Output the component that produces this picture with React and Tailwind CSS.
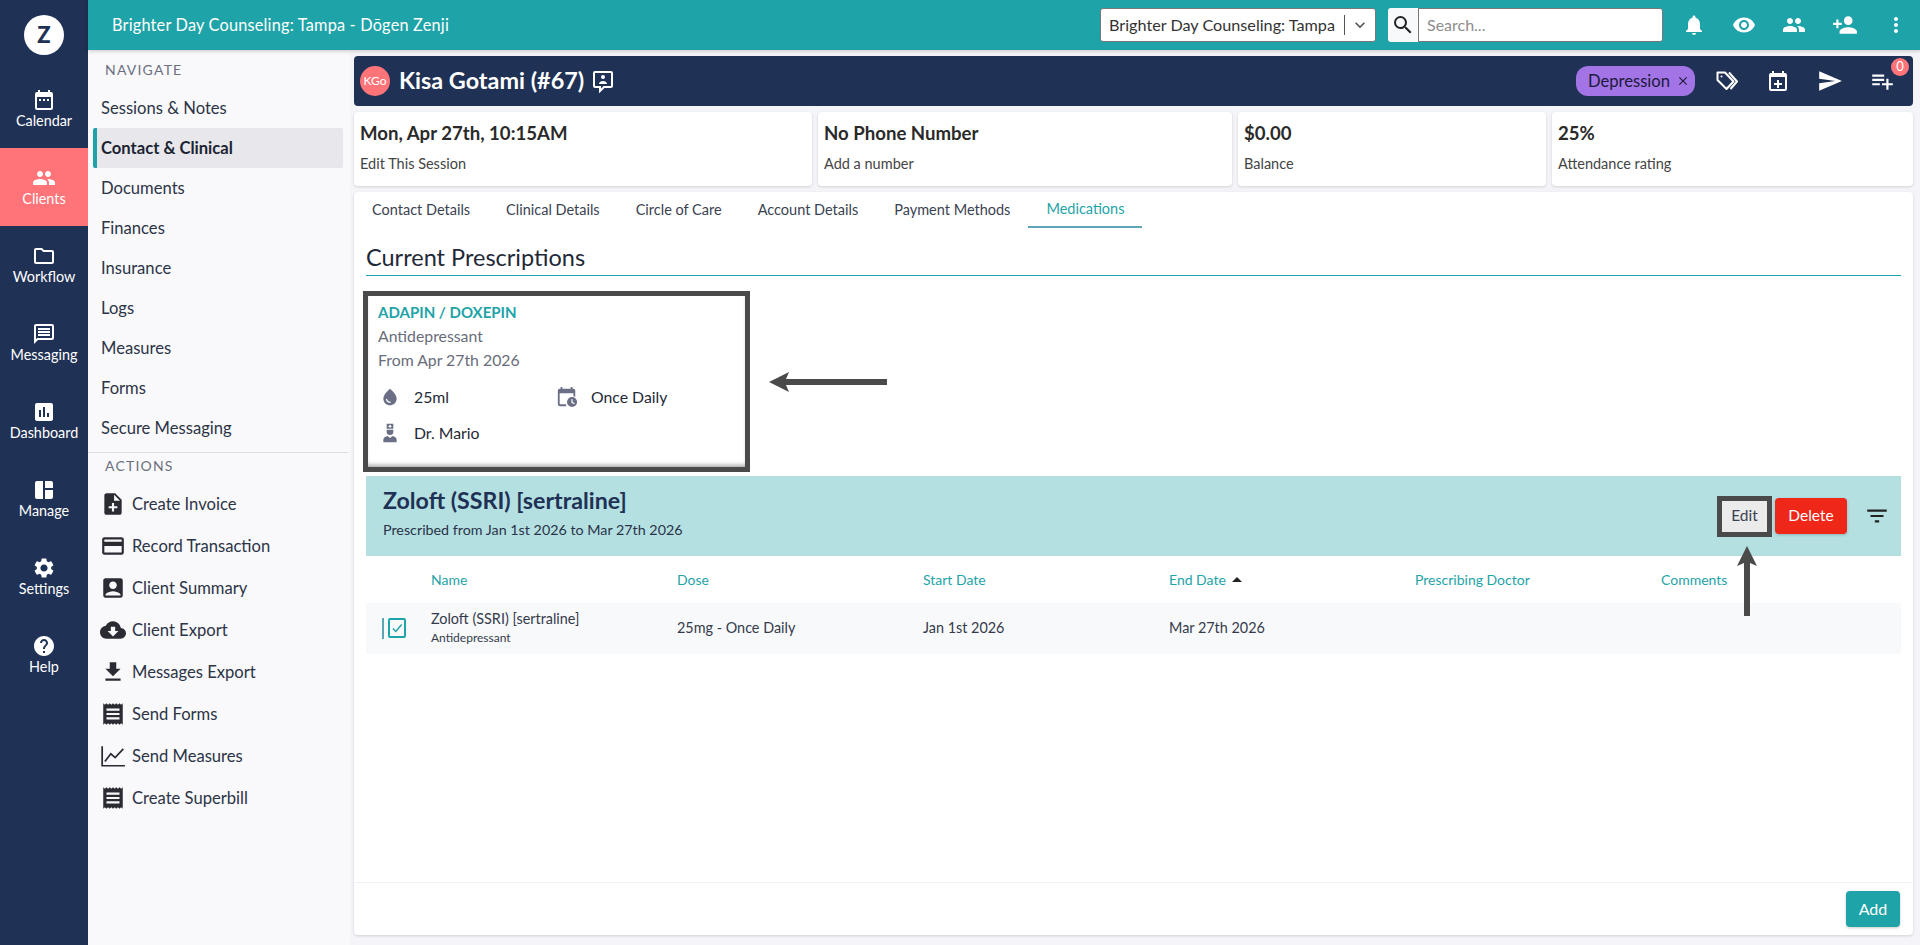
import React from 'react'
import {
  MdPeople, MdOutlineFolder, MdOutlineMessage, MdAssessment, MdSpaceDashboard, MdSettings, MdHelp,
  MdNoteAdd, MdCreditCard, MdAccountBox, MdCloudDownload, MdFileDownload, MdReceipt,
  MdNotifications, MdVisibility, MdPersonAdd, MdMoreVert, MdSearch, MdKeyboardArrowDown,
  MdSend, MdPlaylistAdd, MdWaterDrop, MdFilterList, MdClose,
} from 'react-icons/md'

const CalendarDots = ({ className }) => (
  <svg viewBox="0 0 24 24" fill="currentColor" className={className}>
    <path d="M19 4h-1V2h-2v2H8V2H6v2H5a2 2 0 0 0-2 2v14a2 2 0 0 0 2 2h14a2 2 0 0 0 2-2V6a2 2 0 0 0-2-2zm0 16H5V9h14v11zM7 11h2v2H7zm4 0h2v2h-2zm4 0h2v2h-2z" />
  </svg>
)

const CalendarPlus = ({ className }) => (
  <svg viewBox="0 0 24 24" fill="currentColor" className={className}>
    <path d="M19 4h-1V2h-2v2H8V2H6v2H5a2 2 0 0 0-2 2v14a2 2 0 0 0 2 2h14a2 2 0 0 0 2-2V6a2 2 0 0 0-2-2zm0 16H5V8h14v12zm-8-9h2v3h3v2h-3v3h-2v-3H8v-2h3z" />
  </svg>
)

const CalendarClock = ({ className }) => (
  <svg viewBox="0 0 24 24" fill="currentColor" className={className}>
    <path d="M18 1h-2v2H7V1H5v2H4a2 2 0 0 0-2 2v15a2 2 0 0 0 2 2h7.3a7 7 0 0 1-.3-2H4V8h15v3.1a7 7 0 0 1 2 .6V5a2 2 0 0 0-2-2h-1z" />
    <path fillRule="evenodd" d="M17.5 12a5.5 5.5 0 1 0 0 11 5.500 5.500 0 0 0 0-11zm-.7 2.500h1.300v3l2.300 1.300-.6 1.100-3-1.700z" />
  </svg>
)

const ChartAxes = ({ className }) => (
  <svg viewBox="0 0 24 24" fill="none" stroke="currentColor" strokeWidth="1.6" className={className}>
    <path d="M2 3v18h21" />
    <path d="M4.500 17l5.500-7 4 3.500 7.500-8" />
  </svg>
)

const ChatPerson = ({ className }) => (
  <svg viewBox="0 0 24 24" fill="none" className={className}>
    <path d="M4 3h16a1 1 0 0 1 1 1v13a1 1 0 0 1-1 1h-7l-4 4v-4H4a1 1 0 0 1-1-1V4a1 1 0 0 1 1-1z" stroke="currentColor" strokeWidth="2" />
    <circle cx="12" cy="8" r="2" fill="currentColor" />
    <path d="M8 15c0-2 2-3 4-3s4 1 4 3z" fill="currentColor" />
  </svg>
)

const TagsOutline = ({ className }) => (
  <svg viewBox="0 0 24 24" fill="none" stroke="currentColor" strokeWidth="2" strokeLinejoin="round" className={className}>
    <path d="M2.500 3.500h7.500l8.500 9-7 7.500-9-9z" />
    <path d="M14 3.500l8 9-6.500 7.500" />
    <circle cx="6.500" cy="7.500" r="1" fill="currentColor" stroke="none" />
  </svg>
)

const Doctor = ({ className }) => (
  <svg viewBox="0 0 24 24" fill="currentColor" className={className}>
    <path fillRule="evenodd" d="M8 1h8v6H8zm3 1.500v1H10v1h1v1h2v-1h1v-1h-1v-1z" />
    <path d="M8 8h8v2.500a4 4 0 0 1-8 0z" />
    <path d="M4 23v-3c0-2.500 2.500-4 5-4.500l3 2.500 3-2.500c2.500.5 5 2 5 4.500v3z" />
  </svg>
)

const railItems = [
  { label: 'Calendar', icon: CalendarDots },
  { label: 'Clients', icon: MdPeople, active: true },
  { label: 'Workflow', icon: MdOutlineFolder },
  { label: 'Messaging', icon: MdOutlineMessage },
  { label: 'Dashboard', icon: MdAssessment },
  { label: 'Manage', icon: MdSpaceDashboard },
  { label: 'Settings', icon: MdSettings },
  { label: 'Help', icon: MdHelp },
]

const navItems = ['Sessions & Notes', 'Contact & Clinical', 'Documents', 'Finances', 'Insurance', 'Logs', 'Measures', 'Forms', 'Secure Messaging']

const actionItems = [
  { label: 'Create Invoice', icon: MdNoteAdd },
  { label: 'Record Transaction', icon: MdCreditCard },
  { label: 'Client Summary', icon: MdAccountBox },
  { label: 'Client Export', icon: MdCloudDownload },
  { label: 'Messages Export', icon: MdFileDownload },
  { label: 'Send Forms', icon: MdReceipt },
  { label: 'Send Measures', icon: ChartAxes },
  { label: 'Create Superbill', icon: MdReceipt },
]

const tabs = ['Contact Details', 'Clinical Details', 'Circle of Care', 'Account Details', 'Payment Methods', 'Medications']

const infoCards = [
  { title: 'Mon, Apr 27th, 10:15AM', sub: 'Edit This Session' },
  { title: 'No Phone Number', sub: 'Add a number' },
  { title: '$0.00', sub: 'Balance' },
  { title: '25%', sub: 'Attendance rating' },
]

const columns = ['Name', 'Dose', 'Start Date', 'End Date', 'Prescribing Doctor', 'Comments']

const font = "font-['Lato','Open_Sans',sans-serif]"

const App = () => {
  return (
    <div className={`relative flex h-[945px] w-[1920px] overflow-hidden bg-[#f5f5f9] text-[#1f3154] ${font}`}>
      {/* Left rail */}
      <div className="flex w-[88px] shrink-0 flex-col bg-[#1f3154] text-white">
        <div className="flex h-[70px] shrink-0 items-center justify-center">
          <div className="flex h-10 w-10 items-center justify-center rounded-full bg-white text-[22px] font-black leading-none text-[#1f3154]">Z</div>
        </div>
        {railItems.map((item) => {
          const Icon = item.icon
          return (
            <div key={item.label} className={`flex h-[78px] flex-col items-center justify-center pb-[1px] text-[14.4px] leading-[18px] ${item.active ? 'bg-[#ff7479]' : ''}`}>
              <Icon className="h-6 w-6" />
              <span>{item.label}</span>
            </div>
          )
        })}
      </div>

      <div className="flex min-w-0 flex-1 flex-col">
        {/* Top bar */}
        <div className="z-10 flex h-[50px] shrink-0 items-center bg-[#1ea3a8] pl-6 pr-[12px] text-white shadow-[0_1px_4px_rgba(0,0,0,0.2)]">
          <span className="text-[16.3px] tracking-[0.2px]">Brighter Day Counseling: Tampa - Dōgen Zenji</span>
          <div className="ml-auto flex h-[34px] w-[276px] items-center rounded-[3px] border border-[#777] bg-white pl-2 text-[16.2px] text-[#333]">
            <span className="whitespace-nowrap">Brighter Day Counseling: Tampa</span>
            <span className="ml-auto h-5 w-px bg-[#555]" />
            <MdKeyboardArrowDown className="mx-[5px] h-[20px] w-[20px] text-[#555]" />
          </div>
          <div className="ml-[12px] flex h-[34px] w-[30px] items-center justify-center rounded-l-[3px] bg-[#f8f9fb]">
            <MdSearch className="h-[24px] w-[24px] text-[#222]" />
          </div>
          <div className="flex h-[34px] w-[245px] items-center rounded-r-[3px] border border-[#777] bg-white pl-2 text-[16px] text-[#8d8d8d]">Search...</div>
          <div className="ml-[19px] flex items-center gap-[26px]">
            <MdNotifications className="h-[24px] w-[24px]" />
            <MdVisibility className="h-[24px] w-[24px]" />
            <MdPeople className="h-[24px] w-[24px]" />
            <MdPersonAdd className="h-[26px] w-[26px]" />
            <MdMoreVert className="h-[24px] w-[24px]" />
          </div>
        </div>

        <div className="flex min-h-0 flex-1">
          {/* Secondary sidebar */}
          <div className="w-[262px] shrink-0 bg-[#f9f9fc] pt-[10px]">
            <div className="h-5 pl-[17px] text-[14px] leading-5 tracking-[1.2px] text-[#6b6f80]">NAVIGATE</div>
            <div className="mt-[8px] pl-[5px] pr-[7px]">
              {navItems.map((name) => (
                <div
                  key={name}
                  className={`flex h-10 items-center rounded-[2px] text-[16.6px] ${name === 'Contact & Clinical' ? 'border-l-4 border-[#1ea3a8] bg-[#e8e8ec] pl-[4px] font-bold text-[#1c2433]' : 'pl-[8px] text-[#2c3446]'}`}
                >
                  {name}
                </div>
              ))}
            </div>
            <div className="mt-[4px] mr-[2px] h-px bg-[#dcdce4]" />
            <div className="mt-[3px] h-5 pl-[17px] text-[14px] leading-5 tracking-[1.2px] text-[#6b6f80]">ACTIONS</div>
            <div className="mt-[7px]">
              {actionItems.map((item) => {
                const Icon = item.icon
                return (
                  <div key={item.label} className="flex h-[42px] items-center text-[16.6px] text-[#2c3446]">
                    <div className="flex w-[38px] justify-end text-[#2b2b33]">
                      <Icon className="h-[26px] w-[26px]" />
                    </div>
                    <span className="ml-[6px]">{item.label}</span>
                  </div>
                )
              })}
            </div>
          </div>

          {/* Main column */}
          <div className="flex min-w-0 flex-1 flex-col pl-1 pr-[7px] pt-[6px] pb-[10px]">
            <div className="flex h-[50px] shrink-0 items-center rounded-[4px] bg-[#1f3154] pl-[6px] pr-[18px] text-white">
              <div className="flex h-[30px] w-[30px] items-center justify-center rounded-full bg-[#ff7479] text-[12px]">KGo</div>
              <span className="ml-[9px] text-[23.4px] font-bold leading-none">Kisa Gotami (#67)</span>
              <ChatPerson className="ml-[7px] h-[24px] w-[24px]" />
              <div className="ml-auto flex h-[30px] items-center gap-[6px] rounded-[12px] bg-[#a374e6] pl-[12px] pr-[5px] text-[16.6px] text-[#1b1b3a]">
                Depression
                <MdClose className="h-[14px] w-[14px]" />
              </div>
              <TagsOutline className="ml-[20px] h-[24px] w-[24px]" />
              <CalendarPlus className="ml-[27px] h-[24px] w-[24px]" />
              <MdSend className="ml-[27px] h-[26px] w-[26px]" />
              <div className="relative ml-[26px]">
                <MdPlaylistAdd className="h-[26px] w-[26px]" />
                <span className="absolute -right-[14px] -top-[10px] flex h-[18px] w-[18px] items-center justify-center rounded-full bg-[#ff7479] text-[13px]">0</span>
              </div>
            </div>

            <div className="mt-[6px] grid h-[74px] shrink-0 grid-cols-[458px_414px_308px_361px] gap-[6px]">
              {infoCards.map((card) => (
                <div key={card.title} className="rounded-[4px] bg-white pl-[6px] pt-[9px] shadow-[0_1px_3px_rgba(0,0,0,0.15)]">
                  <div className="text-[18.6px] font-bold leading-[24px] text-[#2a2a2a]">{card.title}</div>
                  <div className="mt-[10px] text-[14.5px] leading-[18px] text-[#444]">{card.sub}</div>
                </div>
              ))}
            </div>

            {/* Content card */}
            <div className="mt-[6px] flex min-h-0 flex-1 flex-col rounded-[4px] bg-white shadow-[0_1px_3px_rgba(0,0,0,0.15)]">
              <div className="flex h-9 shrink-0">
                {tabs.map((tab) => (
                  <div key={tab} className={`flex items-center px-[18px] text-[14.5px] ${tab === 'Medications' ? 'border-b-2 border-[#5fa5b8] text-[#1ea3a8]' : 'text-[#3b4252]'}`}>
                    {tab}
                  </div>
                ))}
              </div>

              <div className="flex min-h-0 flex-1 flex-col px-3">
                <div className="h-[48px] shrink-0 border-b border-[#1ea3a8] pt-[15px] text-[23.5px] leading-[28px] text-[#1f2937]">Current Prescriptions</div>

                {/* Prescription card */}
                <div className="ml-[-3px] mt-[15px] h-[181px] w-[387px] shrink-0 border-[5px] border-[#4a4a4a] bg-white pl-[10px] pt-[4px] shadow-[inset_0_-4px_4px_-2px_rgba(0,0,0,0.35)]">
                  <div className="text-[15px] font-bold leading-[24px] text-[#1ea3a8]">ADAPIN / DOXEPIN</div>
                  <div className="text-[15.8px] leading-[24px] text-[#696d7b]">Antidepressant</div>
                  <div className="text-[15.8px] leading-[24px] text-[#696d7b]">From Apr 27th 2026</div>
                  <div className="mt-[7px] grid grid-cols-[178px_1fr] text-[15.8px] text-[#1f2937]">
                    <div className="flex h-[36px] items-center">
                      <MdWaterDrop className="ml-[2px] h-[20px] w-[20px] text-[#6b6f85]" />
                      <span className="ml-[14px]">25ml</span>
                    </div>
                    <div className="flex h-[36px] items-center">
                      <CalendarClock className="h-[22px] w-[22px] text-[#6b6f85]" />
                      <span className="ml-[13px]">Once Daily</span>
                    </div>
                    <div className="flex h-[35px] items-center">
                      <Doctor className="ml-[2px] h-[20px] w-[20px] text-[#6b6f85]" />
                      <span className="ml-[14px]">Dr. Mario</span>
                    </div>
                  </div>
                </div>

                {/* Medication header */}
                <div className="mt-[4px] flex h-[80px] shrink-0 items-center bg-[#b4e0e2] pl-[17px] pr-[11px]">
                  <div className="mb-[8px]">
                    <div className="text-[23.2px] font-bold leading-[28px] text-[#1f3154]">Zoloft (SSRI) [sertraline]</div>
                    <div className="mt-[7px] text-[14.3px] leading-[18px] text-[#2a3348]">Prescribed from Jan 1st 2026 to Mar 27th 2026</div>
                  </div>
                  <div className="ml-auto flex h-[41px] w-[55px] items-center justify-center border-[5px] border-[#4a4a4a] bg-[#ebebeb] text-[15.5px] text-[#3b4252]">Edit</div>
                  <div className="ml-[3px] flex h-[36px] w-[72px] items-center justify-center rounded-[4px] bg-[#ee2719] text-[15.5px] text-white shadow-[0_1px_3px_rgba(0,0,0,0.2)]">Delete</div>
                  <MdFilterList className="ml-[17px] h-[26px] w-[26px] text-[#222]" />
                </div>

                {/* Table */}
                <div className="grid h-[47px] shrink-0 grid-cols-[65px_246px_246px_246px_246px_246px_1fr] items-center text-[14px] text-[#1ea3a8]">
                  <span />
                  {columns.map((col) => (
                    <span key={col} className="flex items-center gap-[6px]">
                      {col}
                      {col === 'End Date' && <span className="h-0 w-0 border-x-[5px] border-b-[5px] border-x-transparent border-b-[#222]" />}
                    </span>
                  ))}
                </div>
                <div className="grid h-[51px] shrink-0 grid-cols-[65px_246px_246px_246px_246px_246px_1fr] items-center bg-[#f8f9fb] pb-[1px] text-[14.4px] text-[#343b4b]">
                  <div className="flex items-center pl-4">
                    <span className="h-[21px] w-[2px] bg-[#5fa5b8]" />
                    <span className="ml-[4px] flex h-[20px] w-[18px] items-center justify-center rounded-[2px] border-2 border-[#1ea3a8] text-[#1ea3a8]">
                      <svg viewBox="0 0 24 24" fill="none" stroke="currentColor" strokeWidth="2.500" className="h-[14px] w-[14px]"><path d="M5 13l5 5L20 6" /></svg>
                    </span>
                  </div>
                  <div>
                    <div className="leading-[20px]">Zoloft (SSRI) [sertraline]</div>
                    <div className="text-[12px] leading-[18px]">Antidepressant</div>
                  </div>
                  <span>25mg - Once Daily</span>
                  <span>Jan 1st 2026</span>
                  <span>Mar 27th 2026</span>
                </div>

                <div className="flex-1" />
              </div>

              <div className="flex h-[53px] shrink-0 items-center justify-end border-t border-[#f2f2f5] pr-[13px]">
                <div className="flex h-9 w-[54px] items-center justify-center rounded-[4px] bg-[#1ea3a8] text-[16px] text-white shadow-[0_1px_3px_rgba(0,0,0,0.2)]">Add</div>
              </div>
            </div>
          </div>
        </div>
      </div>

      {/* Annotation arrows */}
      <svg className="absolute left-[769px] top-[372px] h-5 w-[118px] text-[#4a4a4a]" viewBox="0 0 118 20" fill="currentColor">
        <path d="M0 10 L20 0 L17 7 H118 V13 H17 L20 20 Z" />
      </svg>
      <svg className="absolute left-[1737px] top-[546px] h-[70px] w-5 text-[#4a4a4a]" viewBox="0 0 20 70" fill="currentColor">
        <path d="M10 0 L20 20 L13 17 V70 H7 V17 L0 20 Z" />
      </svg>
    </div>
  )
}

export default App
